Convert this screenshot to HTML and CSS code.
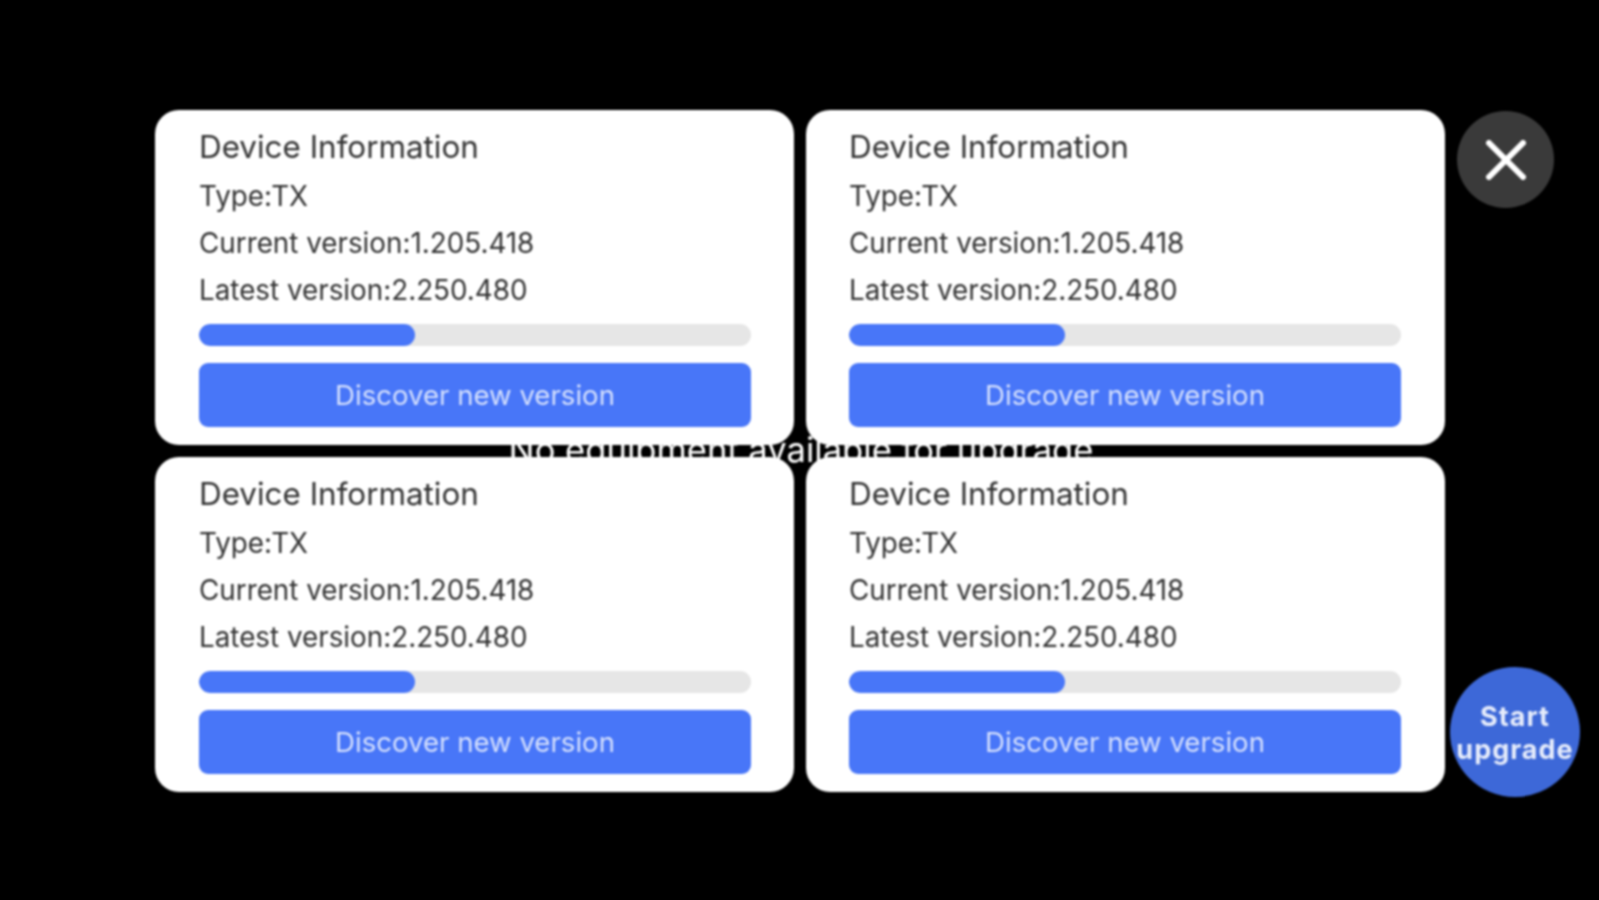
FILE: index.html
```html
<!DOCTYPE html>
<html lang="en">
  <head>
    <meta charset="UTF-8" />
    <title>Device Upgrade</title>
    <link rel="stylesheet" href="styles.css">
  </head>
  <body>
    <div class="screen">
      <p class="empty-msg">No equipment available for upgrade</p>

      <div class="device-grid">
        <div class="device-card">
          <h2>Device Information</h2>
          <p>Type:TX</p>
          <p>Current version:1.205.418</p>
          <p>Latest version:2.250.480</p>
          <div class="progress"><div class="progress-fill"></div></div>
          <button class="discover">Discover new version</button>
        </div>
        <div class="device-card">
          <h2>Device Information</h2>
          <p>Type:TX</p>
          <p>Current version:1.205.418</p>
          <p>Latest version:2.250.480</p>
          <div class="progress"><div class="progress-fill"></div></div>
          <button class="discover">Discover new version</button>
        </div>
        <div class="device-card">
          <h2>Device Information</h2>
          <p>Type:TX</p>
          <p>Current version:1.205.418</p>
          <p>Latest version:2.250.480</p>
          <div class="progress"><div class="progress-fill"></div></div>
          <button class="discover">Discover new version</button>
        </div>
        <div class="device-card">
          <h2>Device Information</h2>
          <p>Type:TX</p>
          <p>Current version:1.205.418</p>
          <p>Latest version:2.250.480</p>
          <div class="progress"><div class="progress-fill"></div></div>
          <button class="discover">Discover new version</button>
        </div>
      </div>

      <button class="close-btn" aria-label="Close">
        <svg width="40" height="40" viewBox="0 0 40 40">
          <path d="M3 3 L37 37 M37 3 L3 37" stroke="#fff" stroke-width="6" stroke-linecap="round" fill="none" />
        </svg>
      </button>
      <button class="start-btn">Start upgrade</button>
    </div>
  </body>
</html>
```

FILE: styles.css
```css
html,
body {
  margin: 0;
  padding: 0;
  background-color: #000;
}

.screen {
  position: relative;
  width: 1599px;
  height: 900px;
  overflow: hidden;
  box-sizing: border-box;
  padding: 110px 0 0 155px;
  background-color: #000;
  font-family: Inter, "Liberation Sans", sans-serif;
  filter: blur(1px);
}

/* Message sits behind the cards, only the gap shows it */
.empty-msg {
  position: absolute;
  left: 0;
  right: 0;
  top: 428px;
  margin: 0;
  padding-left: 3px;
  text-align: center;
  font-size: 34.6px;
  line-height: 42px;
  color: #fff;
}

.device-grid {
  position: relative;
  display: grid;
  grid-template-columns: 639px 639px;
  grid-auto-rows: 335px;
  gap: 12px;
}

.device-card {
  box-sizing: border-box;
  padding: 17px 43px 0 44px;
  background-color: #fff;
  border-radius: 24px;
  color: #333;
}

.device-card:nth-child(even) {
  padding-left: 43px;
  padding-right: 44px;
}

.device-card h2 {
  margin: 0 0 6px;
  font-size: 31.4px;
  line-height: 40px;
  font-weight: 400;
}

.device-card p {
  margin: 0;
  font-size: 27.8px;
  line-height: 47px;
}

.progress {
  height: 22px;
  margin-top: 10px;
  background-color: #e6e6e6;
  border-radius: 11px;
  overflow: hidden;
}

.progress-fill {
  width: 39.2%;
  height: 100%;
  background-color: #4876f8;
  border-radius: 11px;
}

.discover {
  display: block;
  width: 100%;
  height: 64px;
  margin-top: 17px;
  padding: 0;
  border: none;
  border-radius: 9px;
  background-color: #4876f8;
  color: #d5e0fd;
  font-family: inherit;
  font-size: 27.6px;
}

.close-btn {
  position: absolute;
  left: 1457px;
  top: 111px;
  width: 97px;
  height: 97px;
  padding: 0;
  display: flex;
  align-items: center;
  justify-content: center;
  border: none;
  border-radius: 50%;
  background-color: #3a3a3a;
}

.start-btn {
  position: absolute;
  left: 1450px;
  top: 667px;
  width: 130px;
  height: 130px;
  padding: 2px 0 0;
  border: none;
  border-radius: 50%;
  background-color: #3d68d8;
  color: #e6ecfb;
  font-family: inherit;
  font-size: 27px;
  line-height: 33px;
  font-weight: 700;
  letter-spacing: 1px;
}
```
